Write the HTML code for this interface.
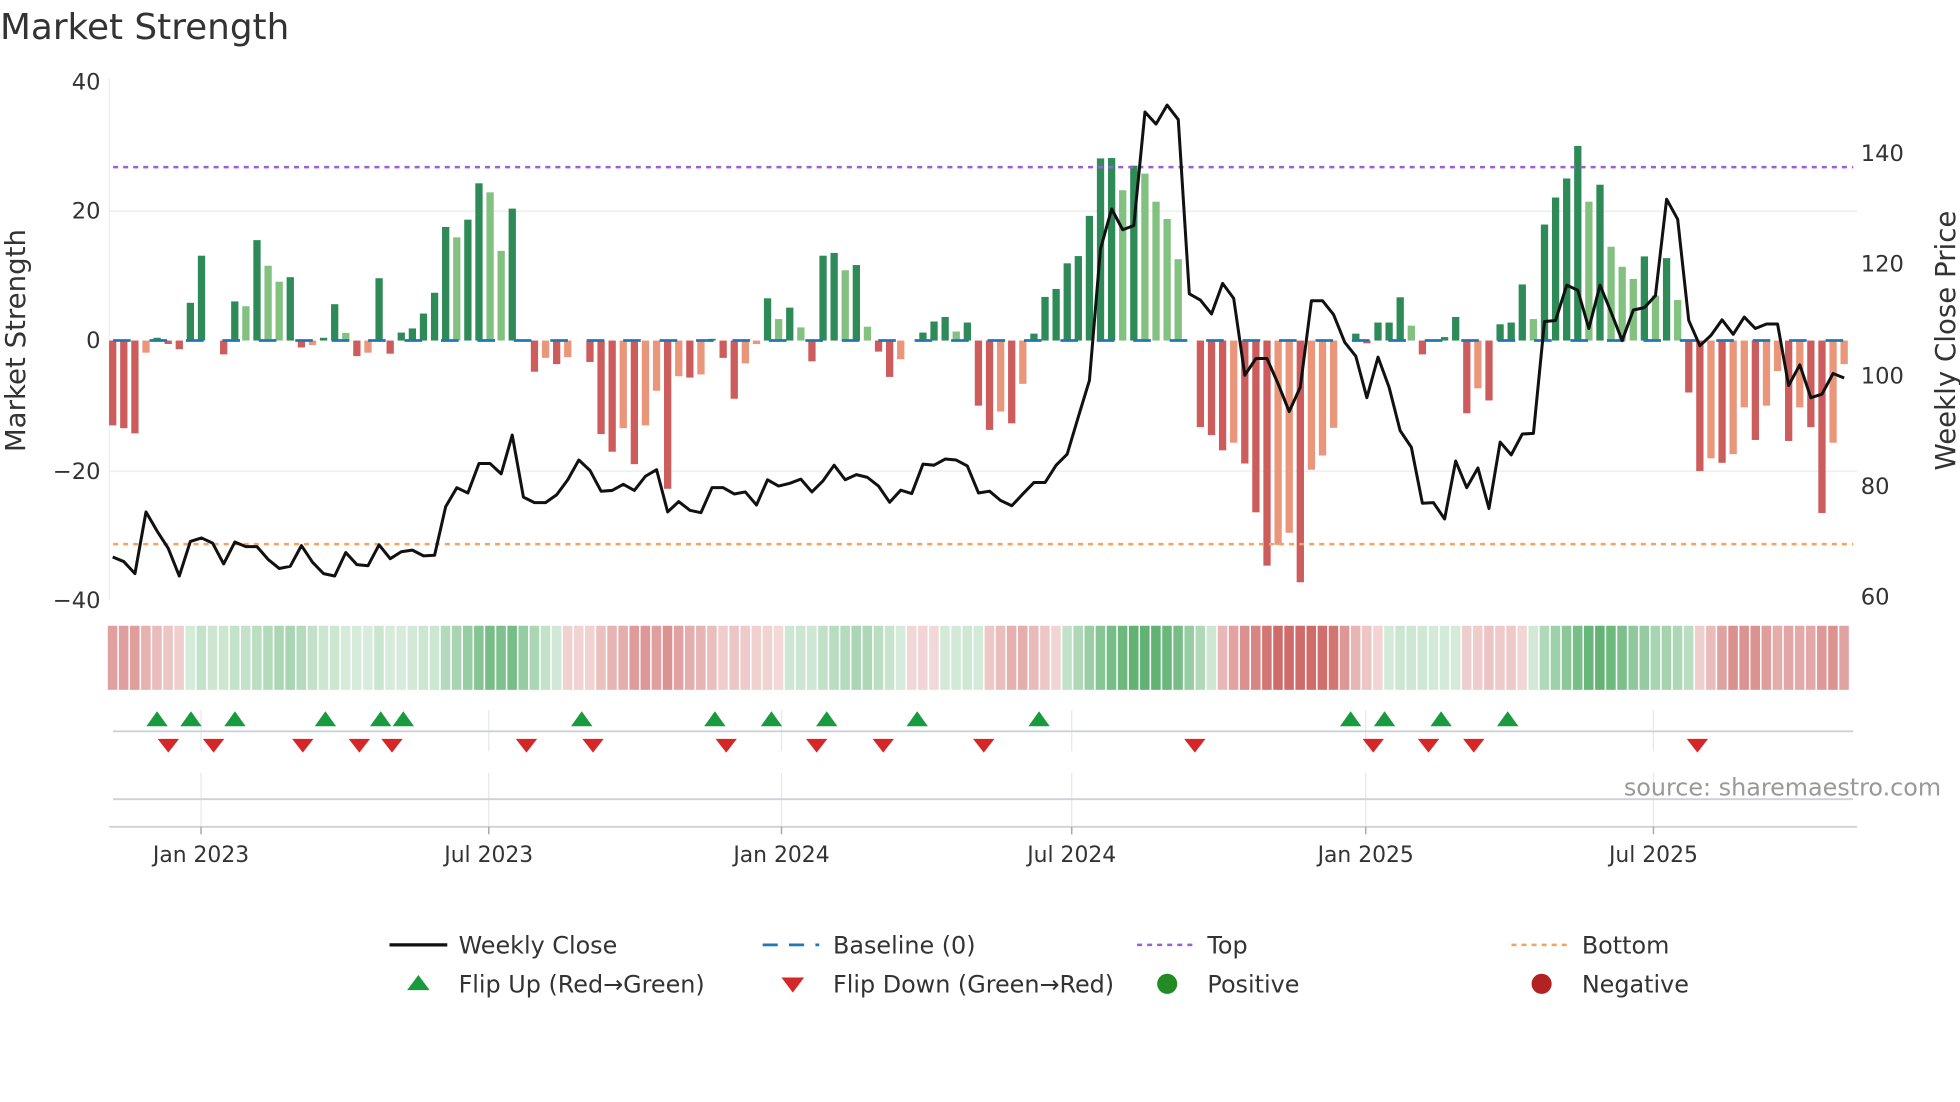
<!DOCTYPE html>
<html><head><meta charset="utf-8">
<style>
html,body{margin:0;padding:0;background:#fff;}
svg{display:block;}
text{font-family:"DejaVu Sans","Liberation Sans",sans-serif;fill:#333;}
</style></head>
<body>
<svg id="c" xmlns="http://www.w3.org/2000/svg" width="1960" height="1102" viewBox="0 0 1560 877">
<text x="0" y="31" font-size="28.5">Market Strength</text>
<line x1="87" y1="62" x2="87" y2="478" stroke="#eceef2" stroke-width="1"/>
<line x1="87" y1="168" x2="1478" y2="168" stroke="#eef0f4" stroke-width="1.5"/>
<line x1="87" y1="375" x2="1478" y2="375" stroke="#eef0f4" stroke-width="1.5"/>
<g font-size="18" text-anchor="end">
<text x="80" y="71">40</text><text x="80" y="174">20</text><text x="80" y="277">0</text><text x="80" y="381">−20</text><text x="80" y="484">−40</text>
</g>
<g font-size="18">
<text x="1481" y="128">140</text><text x="1481" y="216">120</text><text x="1481" y="305">100</text><text x="1481" y="393">80</text><text x="1481" y="481">60</text>
</g>
<text transform="translate(20,271) rotate(-90)" font-size="22" text-anchor="middle">Market Strength</text>
<text transform="translate(1556,271) rotate(-90)" font-size="22" text-anchor="middle">Weekly Close Price</text>
<g id="bars"></g>
<line x1="90" y1="271" x2="1475" y2="271" stroke="#1f77b4" stroke-width="2.2" stroke-dasharray="14 15"/>
<line x1="90" y1="133" x2="1475" y2="133" stroke="#9b5fd6" stroke-width="2" stroke-dasharray="4 4"/>
<line x1="90" y1="433" x2="1475" y2="433" stroke="#f4a460" stroke-width="2" stroke-dasharray="4 4"/>
<polyline id="price" fill="none" stroke="#111" stroke-width="2.4" stroke-linejoin="round"/>
<g id="strip"></g>
<g stroke="#e6e8ec" stroke-width="1">
<line x1="160" y1="565" x2="160" y2="598"/><line x1="389" y1="565" x2="389" y2="598"/><line x1="622" y1="565" x2="622" y2="598"/><line x1="853" y1="565" x2="853" y2="598"/><line x1="1087" y1="565" x2="1087" y2="598"/><line x1="1316" y1="565" x2="1316" y2="598"/>
<line x1="160" y1="615" x2="160" y2="658"/><line x1="389" y1="615" x2="389" y2="658"/><line x1="622" y1="615" x2="622" y2="658"/><line x1="853" y1="615" x2="853" y2="658"/><line x1="1087" y1="615" x2="1087" y2="658"/><line x1="1316" y1="615" x2="1316" y2="658"/>
</g>
<line x1="90" y1="582" x2="1475" y2="582" stroke="#cfd1d6" stroke-width="1.5"/>
<line x1="90" y1="636" x2="1475" y2="636" stroke="#cfd1d6" stroke-width="1.5"/>
<line x1="87" y1="658" x2="1478" y2="658" stroke="#cfd1d6" stroke-width="1.5"/>
<g stroke="#aaa" stroke-width="1.2">
<line x1="160" y1="658" x2="160" y2="664"/><line x1="389" y1="658" x2="389" y2="664"/><line x1="622" y1="658" x2="622" y2="664"/><line x1="853" y1="658" x2="853" y2="664"/><line x1="1087" y1="658" x2="1087" y2="664"/><line x1="1316" y1="658" x2="1316" y2="664"/>
</g>
<g id="flips"></g>
<text x="1545" y="633" font-size="19" text-anchor="end" style="fill:#999">source: sharemaestro.com</text>
<g font-size="17.4" text-anchor="middle">
<text x="160" y="686">Jan 2023</text><text x="389" y="686">Jul 2023</text><text x="622" y="686">Jan 2024</text><text x="853" y="686">Jul 2024</text><text x="1087" y="686">Jan 2025</text><text x="1316" y="686">Jul 2025</text>
</g>
<g font-size="19">
<line x1="310" y1="752" x2="356" y2="752" stroke="#111" stroke-width="2.6"/>
<text x="365" y="759">Weekly Close</text>
<line x1="607" y1="752" x2="652" y2="752" stroke="#1f77b4" stroke-width="2.2" stroke-dasharray="12 9"/>
<text x="663" y="759">Baseline (0)</text>
<line x1="905" y1="752" x2="950" y2="752" stroke="#9b5fd6" stroke-width="2" stroke-dasharray="4 4"/>
<text x="961" y="759">Top</text>
<line x1="1203" y1="752" x2="1248" y2="752" stroke="#f4a460" stroke-width="2" stroke-dasharray="4 4"/>
<text x="1259" y="759">Bottom</text>
<polygon points="324,788 342,788 333,776" fill="#1a9a3e"/>
<text x="365" y="790">Flip Up (Red→Green)</text>
<polygon points="622,778 640,778 631,790" fill="#d62728"/>
<text x="663" y="790">Flip Down (Green→Red)</text>
<circle cx="929" cy="783" r="8" fill="#238b23"/>
<text x="961" y="790">Positive</text>
<circle cx="1227" cy="783" r="8" fill="#b22222"/>
<text x="1259" y="790">Negative</text>
</g>
</svg>
<script>
(function(){
var NS="http://www.w3.org/2000/svg";
var B="1055r,1063r,1078r,845o,802d,820r,835r,701d,565d,810z,850r,697d,711l,520d,594l,640l,627d,830r,823o,802d,705d,788l,855r,845o,630d,848r,787d,775d,732d,672d,482d,512l,461d,356d,382l,551l,429d,810z,900r,860o,878r,858o,810z,872r,1080r,1131r,1063o,1167r,1055o,955o,1238r,913o,917r,908o,805d,860r,978r,876o,820o,688d,748l,715d,772l,870r,565d,557d,607l,592d,770l,842r,915r,864o,810z,787d,755d,742d,784l,758d,998r,1068r,1015o,1049r,935o,790d,684d,661d,587d,566d,450d,284d,283d,376l,305d,328l,409l,459l,575l,810z,1060r,1083r,1127r,1105o,1165r,1306r,1460r,1400o,1365o,1508r,1183o,1142o,1062o,810z,790d,818r,758d,758d,685d,767l,850r,810z,800d,742d,1020r,948o,983r,763d,758d,648d,748l,475d,397d,342d,248d,409l,360d,539l,597l,632l,567d,680l,572d,693l,960r,1187r,1150o,1163r,1138o,1003o,1097r,998o,898o,1100r,1003o,1060r,1308r,1105o,878o".split(",");
var L=[1435,1448,1483,1305,1360,1410,1490,1390,1380,1395,1455,1392,1405,1405,1442,1468,1462,1402,1450,1483,1490,1422,1457,1460,1400,1440,1420,1415,1432,1430,1290,1235,1250,1165,1165,1195,1083,1262,1278,1278,1255,1212,1155,1185,1245,1243,1225,1243,1202,1183,1305,1275,1300,
1307,1235,1235,1253,1247,1285,1212,1230,1222,1210,1247,1215,1170,1212,1197,1205,1230,1277,1242,1252,1167,1170,1152,1155,1172,1250,1245,1272,1287,1253,1220,1220,1170,1138,1030,925,545,430,490,478,150,185,130,172,675,693,733,645,688,910,862,
862,935,1015,945,695,695,735,815,855,975,858,945,1070,1118,1280,1278,1325,1158,1235,1178,1295,1103,1140,1080,1078,755,752,650,665,775,650,728,810,722,715,680,402,460,752,825,795,750,792,742,775,762,762,940,880,975,965,905,918];
function Y(z){return 271+(z-810)/3.628;}
function X(i){return 89.7+i*8.834;}
var col={d:"#2e8b57",l:"#82c17f",r:"#cd5c5c",o:"#e9967a"};
var g=document.getElementById("bars"),vals=[];
for(var i=0;i<B.length;i++){
 var z=parseFloat(B[i]),t=B[i].slice(-1),y=Y(z);vals.push((810-z)/18.72);
 if(t==="z")continue;
 var r=document.createElementNS(NS,"rect");
 r.setAttribute("x",(X(i)-2.9).toFixed(2));r.setAttribute("width","5.8");
 r.setAttribute("y",Math.min(y,271).toFixed(2));r.setAttribute("height",Math.max(Math.abs(y-271),0.8).toFixed(2));
 r.setAttribute("fill",col[t]);g.appendChild(r);
}
var pts=[];for(i=0;i<L.length;i++)pts.push(X(i).toFixed(1)+","+Y(L[i]).toFixed(1));
document.getElementById("price").setAttribute("points",pts.join(" "));
var s=document.getElementById("strip");
for(i=0;i<vals.length;i++){
 var sum=0,n=0;for(var k=i-4;k<=i;k++){if(k>=0&&k<vals.length){sum+=vals[k];n++;}}
 var v=sum/n,a=0.2+0.6*Math.min(1,Math.abs(v)/25)+0.08*Math.min(1,Math.abs(vals[i])/20);
 var base=v>=0?[76,168,96]:[200,88,86];
 var c=base.map(function(b){return Math.round(255-(255-b)*a);});
 var r=document.createElementNS(NS,"rect");
 r.setAttribute("x",(X(i)-3.9).toFixed(2));r.setAttribute("width","7.6");
 r.setAttribute("y","498");r.setAttribute("height","51");
 r.setAttribute("fill","rgb("+c.join(",")+")");s.appendChild(r);
}
var up=[125,152,187,259,303,321,463,569,614,658,730,827,1075,1102,1147,1200];
var dn=[134,170,241,286,312,419,472,578,650,703,783,951,1093,1137,1173,1351];
var f=document.getElementById("flips");
up.forEach(function(x){var p=document.createElementNS(NS,"polygon");p.setAttribute("points",(x-8.5)+",578 "+(x+8.5)+",578 "+x+",566");p.setAttribute("fill","#1a9a3e");f.appendChild(p);});
dn.forEach(function(x){var p=document.createElementNS(NS,"polygon");p.setAttribute("points",(x-8.5)+",588 "+(x+8.5)+",588 "+x+",599");p.setAttribute("fill","#d62728");f.appendChild(p);});
})();
</script>
</body></html>
